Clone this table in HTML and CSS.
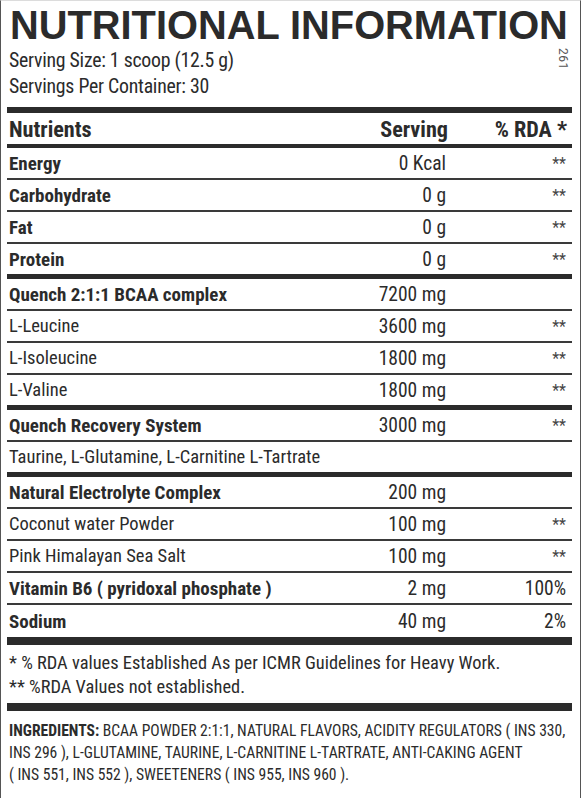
FILE: index.html
```html
<!DOCTYPE html>
<html lang="en">
<head>
<meta charset="utf-8">
<title>Nutritional Information</title>
<link rel="stylesheet" href="styles.css">
</head>
<body>
<div class="label">
  <span class="lot">261</span>
  <h1 class="title">NUTRITIONAL INFORMATION</h1>
  <p class="serving">Serving Size: 1 scoop (12.5 g)</p>
  <p class="serving">Servings Per Container: 30</p>

  <div class="facts">
    <div class="row head"><span class="name">Nutrients</span><span class="srv">Serving</span><span class="rda">% RDA *</span></div>

    <div class="row strong"><span class="name">Energy</span><span class="srv">0 Kcal</span><span class="rda na">**</span></div>
    <div class="row strong"><span class="name">Carbohydrate</span><span class="srv">0 g</span><span class="rda na">**</span></div>
    <div class="row strong"><span class="name">Fat</span><span class="srv">0 g</span><span class="rda na">**</span></div>
    <div class="row strong end"><span class="name">Protein</span><span class="srv">0 g</span><span class="rda na">**</span></div>

    <div class="row strong"><span class="name">Quench 2:1:1 BCAA complex</span><span class="srv">7200 mg</span><span class="rda"></span></div>
    <div class="row"><span class="name">L-Leucine</span><span class="srv">3600 mg</span><span class="rda na">**</span></div>
    <div class="row"><span class="name">L-Isoleucine</span><span class="srv">1800 mg</span><span class="rda na">**</span></div>
    <div class="row end"><span class="name">L-Valine</span><span class="srv">1800 mg</span><span class="rda na">**</span></div>

    <div class="row strong"><span class="name">Quench Recovery System</span><span class="srv">3000 mg</span><span class="rda na">**</span></div>
    <div class="row end"><span class="name">Taurine, L-Glutamine, L-Carnitine L-Tartrate</span><span class="srv"></span><span class="rda"></span></div>

    <div class="row strong"><span class="name">Natural Electrolyte Complex</span><span class="srv">200 mg</span><span class="rda"></span></div>
    <div class="row"><span class="name">Coconut water Powder</span><span class="srv">100 mg</span><span class="rda na">**</span></div>
    <div class="row"><span class="name">Pink Himalayan Sea Salt</span><span class="srv">100 mg</span><span class="rda na">**</span></div>
    <div class="row strong"><span class="name">Vitamin B6 ( pyridoxal phosphate )</span><span class="srv">2 mg</span><span class="rda">100%</span></div>
    <div class="row strong last"><span class="name">Sodium</span><span class="srv">40 mg</span><span class="rda">2%</span></div>
  </div>

  <div class="notes">
    <p>* % RDA values Established As per ICMR Guidelines for Heavy Work.</p>
    <p>** %RDA Values not established.</p>
  </div>

  <p class="ingredients"><b>INGREDIENTS:</b> BCAA POWDER 2:1:1, NATURAL FLAVORS, ACIDITY REGULATORS ( INS 330, INS 296 ), L-GLUTAMINE, TAURINE, L-CARNITINE L-TARTRATE, ANTI-CAKING AGENT (&nbsp;INS&nbsp;551, INS 552 ), SWEETENERS ( INS 955, INS 960 ).</p>
</div>
</body>
</html>
```

FILE: styles.css
```css
* { box-sizing: border-box; }

html, body {
  margin: 0;
  padding: 0;
  background: #ffffff;
}

body {
  color: #2b2b2b;
  font-family: "Roboto", "Liberation Sans", sans-serif;
  font-stretch: 75%;
}

.label {
  position: relative;
  height: 798px;
  border-left: 1px solid #555;
  border-right: 1px solid #555;
  border-top: 1px solid #dcdcdc;
  padding: 4px 8px 0 6px;
  overflow: hidden;
}

.lot {
  position: absolute;
  top: 47px;
  right: 10px;
  writing-mode: vertical-rl;
  font-size: 12px;
  font-stretch: 100%;
  color: #555;
  letter-spacing: 0.5px;
}

.title {
  margin: 0;
  padding-left: 3px;
  font-family: "Liberation Sans", Arial, sans-serif;
  font-stretch: 100%;
  font-weight: 700;
  font-size: 39.8px;
  line-height: 40px;
  white-space: nowrap;
}

.serving {
  margin: 0;
  padding-left: 2px;
  font-size: 19.8px;
  line-height: 26px;
  letter-spacing: -0.25px;
}

.serving:first-of-type {
  margin-top: 2.5px;
}

.facts {
  margin-top: 7.5px;
  border-top: 6px solid #2b2b2b;
}

.row {
  display: grid;
  grid-template-columns: 1fr 110px 120px;
  align-items: center;
  height: 32px;
  border-bottom: 2px solid #3a3a3a;
  font-size: 19.5px;
}

.row .name { padding-left: 2px; white-space: nowrap; font-size: 18.5px; }
.row .srv { text-align: right; padding-right: 6px; }
.row .rda { text-align: right; padding-right: 6px; }
.row .na { color: #444; font-size: 16px; }

.row.strong .name { font-weight: 700; font-size: 19px; }

.row.head {
  height: 35px;
  border-bottom: 4px solid #2b2b2b;
  font-size: 22.2px;
  font-weight: 700;
}
.row.head .name { font-size: 22.2px; }
.row.head .srv { padding-right: 4px; }
.row.head .rda { padding-right: 5px; }

.row.end { height: 35px; border-bottom: 5px solid #2b2b2b; }
.row.last { height: 40px; border-bottom: 8px solid #2b2b2b; }

.notes {
  padding: 6px 0 0 2px;
  font-size: 18.4px;
  line-height: 24px;
}
.notes p { margin: 0; }

.ingredients {
  margin: 4px 0 0;
  border-top: 8px solid #2b2b2b;
  padding: 9px 2px 0 2px;
  font-size: 15.6px;
  line-height: 22px;
}
```
